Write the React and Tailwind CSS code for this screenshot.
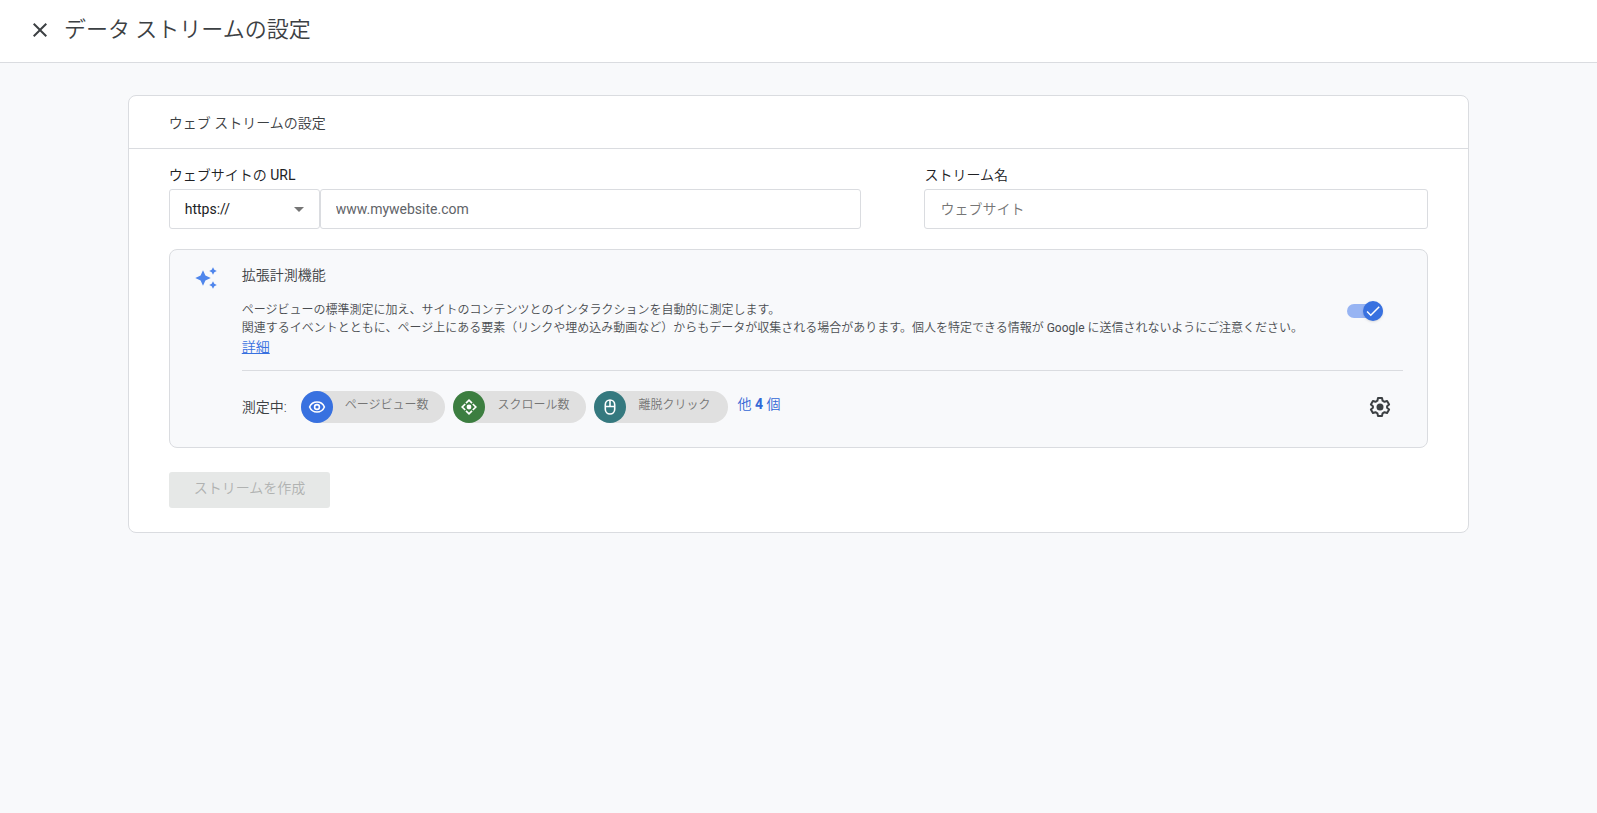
import React from "react";
import { MdClose, MdArrowDropDown, MdCheck } from "react-icons/md";

function SparkleIcon() {
  return (
    <svg viewBox="0 0 24 24" className="size-6 fill-[#4f86ec]" aria-hidden="true">
      <path d="M9 5.300 11.400 10.600 16.700 13 11.400 15.400 9 20.700 6.600 15.400 1.300 13 6.600 10.600Z" />
      <path d="M19 2.200 20.300 4.700 22.800 6 20.300 7.300 19 9.800 17.700 7.300 15.200 6 17.700 4.700Z" />
      <path d="M19 16.200 20.300 18.700 22.800 20 20.300 21.300 19 23.800 17.700 21.300 15.200 20 17.700 18.700Z" />
    </svg>
  );
}

function EyeIcon() {
  return (
    <svg viewBox="0 0 18 18" className="size-[18px] fill-none stroke-white stroke-[1.6]" aria-hidden="true">
      <path d="M1.600 9C2.900 5.900 5.700 4 9 4s6.100 1.900 7.400 5c-1.300 3.100-4.100 5-7.400 5S2.900 12.100 1.600 9Z" />
      <circle cx="9" cy="9" r="2.400" />
    </svg>
  );
}

function ScrollIcon() {
  return (
    <svg viewBox="0 0 18 18" className="size-[18px] fill-none stroke-white stroke-[1.7]" aria-hidden="true">
      <circle cx="9" cy="9" r="2.400" className="fill-white stroke-none" />
      <path d="M6 5.200 9 2.200l3 3M6 12.800l3 3 3-3M5.200 6 2.200 9l3 3M12.800 6l3 3-3 3" />
    </svg>
  );
}

function MouseIcon() {
  return (
    <svg viewBox="0 0 18 18" className="size-[18px] fill-none stroke-white stroke-[1.6]" aria-hidden="true">
      <rect x="4.300" y="2" width="9.400" height="14" rx="4.700" />
      <path d="M4.300 8.500h9.400M9 2v6.500" />
    </svg>
  );
}

function GearIcon() {
  return (
    <svg viewBox="0 0 24 24" className="size-6 fill-none stroke-[#3c4043] stroke-2" strokeLinejoin="round" aria-hidden="true">
      <path d="M10 3h4l.6 2.700 1.900 1.100 2.600-.8 2 3.500-2 1.800v1.400l2 1.800-2 3.500-2.600-.8-1.900 1.100L14 21h-4l-.6-2.700-1.900-1.100-2.600.8-2-3.500 2-1.800v-1.400l-2-1.800 2-3.500 2.600.8 1.900-1.100Z" />
      <circle cx="12" cy="12" r="3.500" className="fill-[#3c4043] stroke-none" />
    </svg>
  );
}

function Chip({ icon, color, label }) {
  return (
    <li className="flex h-8 items-center rounded-full bg-[#e0e0e0] pr-[17px]">
      <span className={`flex size-8 items-center justify-center rounded-full ${color}`}>{icon}</span>
      <span className="pb-1 pl-3 text-xs text-[#757575]">{label}</span>
    </li>
  );
}

const field =
  "h-10 w-full min-w-0 rounded-[3px] border border-[#dadce0] bg-white px-[15px] text-sm outline-none focus:border-[#3871e0]";

export default function App() {
  return (
    <div className="min-h-screen bg-[#f8f9fb] font-['Roboto','Noto_Sans_CJK_JP',sans-serif] text-sm font-[350] text-[#3c4043]">
      <header className="flex items-center gap-3 border-b border-[#dadce0] bg-white px-7 pt-3.5 pb-4">
        <button type="button" aria-label="閉じる" className="flex size-6 items-center justify-center">
          <MdClose className="size-6" />
        </button>
        <h1 className="text-[22px] leading-8">データ ストリームの設定</h1>
      </header>

      <main className="mx-[8%] pt-8">
        <section className="rounded-lg border border-[#dadce0] bg-white">
          <h2 className="border-b border-[#dadce0] px-10 pt-[17px] pb-[15px] leading-5">ウェブ ストリームの設定</h2>
          <form className="px-10 pt-4 pb-6" onSubmit={(e) => e.preventDefault()}>
            <div className="flex justify-between">
              <div className="w-[55%]">
                <label htmlFor="url" className="block pb-1 leading-5 text-[#202124]">
                  ウェブサイトの <span className="font-normal">URL</span>
                </label>
                <div className="flex">
                  <div className="relative w-[151px] shrink-0">
                    <select aria-label="プロトコル" defaultValue="https" className={`${field} appearance-none font-normal text-[#202124]`}>
                      <option value="https">https://</option>
                      <option value="http">http://</option>
                    </select>
                    <MdArrowDropDown className="pointer-events-none absolute top-2 right-[9px] size-6 text-[#757575]" />
                  </div>
                  <input id="url" type="text" placeholder="www.mywebsite.com" className={`${field} font-normal placeholder:text-[#5f6368]`} />
                </div>
              </div>
              <div className="w-[40%]">
                <label htmlFor="name" className="block pb-1 leading-5 text-[#202124]">
                  ストリーム名
                </label>
                <input id="name" type="text" placeholder="ウェブサイト" className={`${field} placeholder:text-[#757575]`} />
              </div>
            </div>

            <section className="mt-5 flex gap-6 rounded-lg border border-[#dadce0] bg-[#f8f9fb] px-6 pt-[15px] pb-4">
              <SparkleIcon />
              <div className="min-w-0 flex-1">
                <div className="flex items-center justify-between gap-4 border-b border-[#dadce0] pb-[13px]">
                  <div>
                    <h3 className="leading-5">拡張計測機能</h3>
                    <p className="pt-4 text-xs leading-[18px] text-[#4a4d51]">
                      ページビューの標準測定に加え、サイトのコンテンツとのインタラクションを自動的に測定します。
                      <br />
                      関連するイベントとともに、ページ上にある要素（リンクや埋め込み動画など）からもデータが収集される場合があります。個人を特定できる情報が <span className="font-normal">Google</span> に送信されないようにご注意ください。
                    </p>
                    <a href="#details" className="text-sm text-[#3871e0] underline">詳細</a>
                  </div>
                  <label className="relative mr-5 flex h-5 w-9 shrink-0 items-center">
                    <input type="checkbox" role="switch" defaultChecked aria-label="拡張計測機能" className="peer h-3.5 w-9 appearance-none rounded-full bg-[#bdc1c6] checked:bg-[#97b4f3]" />
                    <span className="pointer-events-none absolute top-0 left-0 flex size-5 items-center justify-center rounded-full bg-[#80868b] text-white shadow peer-checked:left-4 peer-checked:bg-[#3871e0]">
                      <MdCheck className="size-[18px]" />
                    </span>
                  </label>
                </div>
                <div className="flex items-center pt-5 pb-2">
                  <span>測定中:</span>
                  <ul className="flex gap-2 pl-3.5">
                    <Chip icon={<EyeIcon />} color="bg-[#3871e0]" label="ページビュー数" />
                    <Chip icon={<ScrollIcon />} color="bg-[#3c7e40]" label="スクロール数" />
                    <Chip icon={<MouseIcon />} color="bg-[#35797f]" label="離脱クリック" />
                  </ul>
                  <button type="button" className="pb-1.5 pl-2.5 text-[#3367d6]">
                    他 <span className="font-bold">4</span> 個
                  </button>
                  <button type="button" aria-label="設定" className="mr-[11px] ml-auto">
                    <GearIcon />
                  </button>
                </div>
              </div>
            </section>

            <button type="submit" disabled className="mt-6 h-9 rounded-[3px] bg-[#e6e8e7] px-[25px] pb-1 text-[#b0b2b1]">
              ストリームを作成
            </button>
          </form>
        </section>
      </main>
    </div>
  );
}
